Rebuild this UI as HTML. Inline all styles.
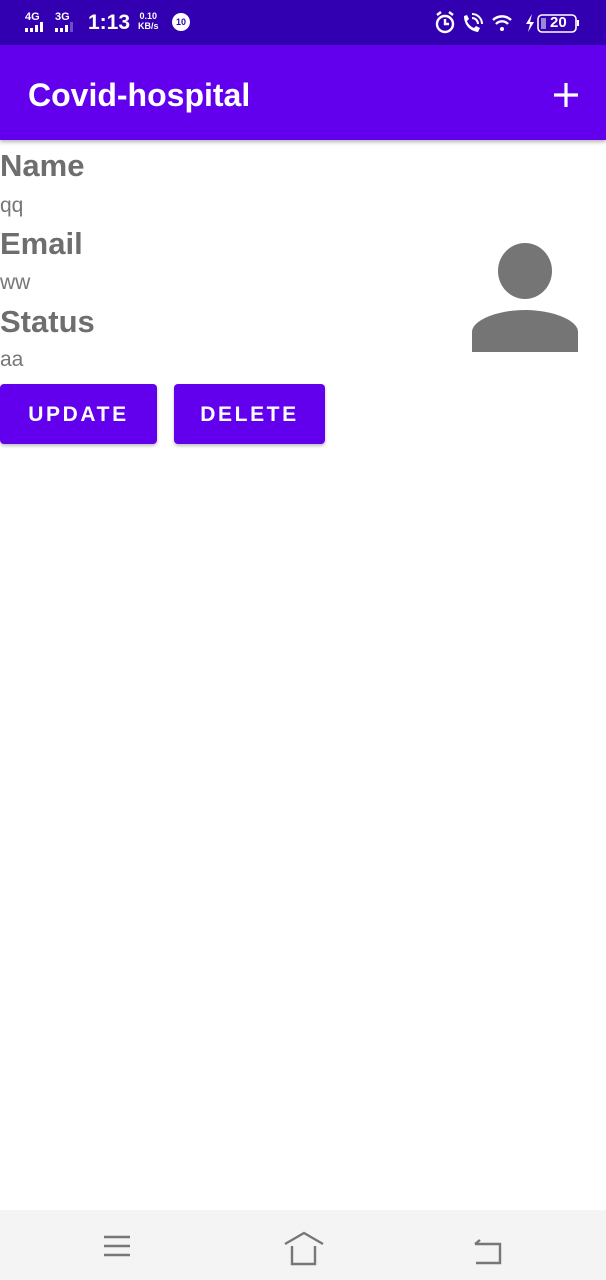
<!DOCTYPE html>
<html><head><meta charset="utf-8"><style>
*{margin:0;padding:0;box-sizing:border-box}
body{width:606px;height:1280px;position:relative;background:#fff;font-family:"Liberation Sans",sans-serif;overflow:hidden}
.sb{position:absolute;top:0;left:0;width:606px;height:45px;background:#3200b0;color:#fff}
.tb{position:absolute;top:45px;left:0;width:606px;height:95px;background:#6200ee;box-shadow:0 2px 4px rgba(0,0,0,.3)}
.title{position:absolute;left:28px;top:32px;color:#fff;font-size:32px;font-weight:bold}
.lab{position:absolute;left:0;color:#6e6e6e;font-size:31px;font-weight:bold}
.val{position:absolute;left:0;color:#777;font-size:21px}
.btn{position:absolute;top:384px;height:60px;background:#6200ee;border-radius:4px;color:#fff;font-size:21px;font-weight:bold;letter-spacing:2.6px;text-align:center;line-height:62px;box-shadow:0 2px 3px rgba(0,0,0,.25)}
.nav{position:absolute;top:1210px;left:0;width:606px;height:70px;background:#f4f4f4}
</style></head><body>
<div class="sb">
 <div style="position:absolute;left:25px;top:11px;font-size:11px;font-weight:bold">4G</div>
 <div style="position:absolute;left:55px;top:11px;font-size:11px;font-weight:bold">3G</div>
 <svg style="position:absolute;left:24px;top:22px" width="60" height="12"><g fill="#fff"><rect x="1" y="6" width="3" height="4"/><rect x="6" y="6" width="3" height="4"/><rect x="11" y="3" width="3" height="7"/><rect x="16" y="0" width="3" height="10"/><rect x="31" y="6" width="3" height="4"/><rect x="36" y="6" width="3" height="4"/><rect x="41" y="3" width="3" height="7"/></g><rect x="46" y="0" width="3" height="10" fill="#6a50c0"/></svg>
 <div style="position:absolute;left:88px;top:11px;font-size:21px;font-weight:bold">1:13</div>
 <div style="position:absolute;left:138px;top:11px;font-size:9px;font-weight:bold;line-height:10px;text-align:center">0.10<br>KB/s</div>
 <div style="position:absolute;left:172px;top:13px;width:18px;height:18px;border-radius:50%;background:#fff;color:#3200b0;font-size:9px;font-weight:bold;text-align:center;line-height:18px">10</div>
 <svg style="position:absolute;left:434px;top:10px" width="150" height="26" fill="none" stroke="#fff" stroke-width="2.4">
  <circle cx="11" cy="14" r="8"/><path d="M11 9v5h4M3 5l4-3M19 5l-4-3"/>
  <path d="M30 6c0 9 6 15 14 16l2-4-4-2-2 2c-3-1-6-4-7-7l2-2-2-4z" fill="#fff" stroke="none"/>
  <path d="M38 8a6 6 0 0 1 6 6M38 4a10 10 0 0 1 10 10" stroke-width="2"/>
  <path d="M59 10a13 13 0 0 1 18 0M62 14a8 8 0 0 1 12 0" stroke-width="2.4"/><circle cx="68" cy="19" r="2" fill="#fff" stroke="none"/>
  <path d="M98 4l-6 10h4l-2 8 6-10h-4z" fill="#fff" stroke="none"/>
  <rect x="104" y="5" width="38" height="17" rx="4" stroke-width="1.6"/><rect x="107" y="8" width="5" height="11" fill="#9a88d8" stroke="none"/><rect x="143" y="10" width="2" height="6" fill="#fff" stroke="none"/>
 </svg>
 <div style="position:absolute;left:550px;top:14px;font-size:15px;font-weight:bold">20</div>
</div>
<div class="tb"><div class="title">Covid-hospital</div>
 <svg style="position:absolute;left:553px;top:37px" width="26" height="26"><path d="M13 1v24M1 13h24" stroke="#fff" stroke-width="3.2"/></svg>
</div>
<div class="lab" style="top:148px">Name</div>
<div class="val" style="top:194px">qq</div>
<div class="lab" style="top:226px">Email</div>
<div class="val" style="top:271px">ww</div>
<div class="lab" style="top:304px">Status</div>
<div class="val" style="top:348px">aa</div>
<svg style="position:absolute;left:470px;top:242px" width="112" height="112" fill="#757575">
 <ellipse cx="55" cy="29" rx="27" ry="28"/>
 <path d="M2 110V90C2 78 28 68 55 68S108 78 108 90V110Z"/>
</svg>
<div class="btn" style="left:0;width:157px">UPDATE</div>
<div class="btn" style="left:174px;width:151px">DELETE</div>
<div class="nav">
 <svg style="position:absolute;left:100px;top:20px" width="40" height="40" fill="none" stroke="#777" stroke-width="2.4">
  <path d="M4 15h26M4 24h26M4 33h26" transform="translate(0,-8)"/>
 </svg>
 <svg style="position:absolute;left:282px;top:20px" width="44" height="40" fill="none" stroke="#777" stroke-width="2.4">
  <path d="M3 14L22 3l19 11M10 16v18h23V16"/>
 </svg>
 <svg style="position:absolute;left:470px;top:20px" width="40" height="40" fill="none" stroke="#777" stroke-width="2.4">
  <path d="M5 14h25v19H6M5 14l5-4"/>
 </svg>
</div>
</body></html>
